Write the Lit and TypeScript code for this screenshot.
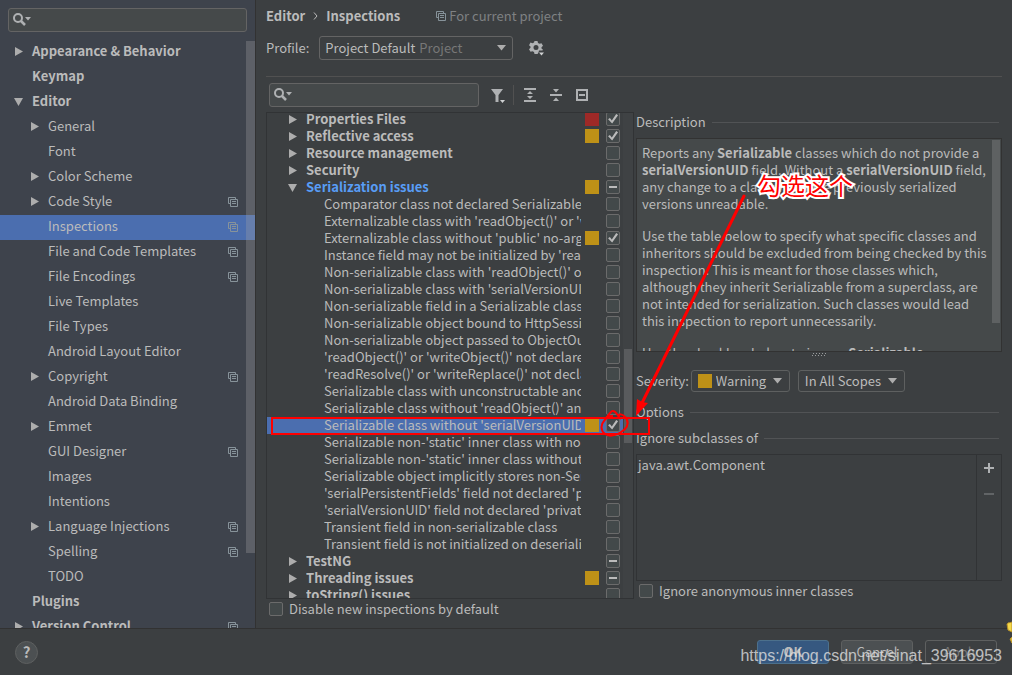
import { LitElement, html, css, svg, nothing } from "lit";
import { customElement, property } from "lit/decorators.js";
import { classMap } from "lit/directives/class-map.js";

const base = css`
  *, *::before, *::after { box-sizing: border-box; }
  button, input, select { font: inherit; color: inherit; margin: 0; }
  svg { display: block; flex: none; }
  ul { list-style: none; margin: 0; padding: 0; }
  input[type="checkbox"] {
    appearance: none;
    flex: none;
    display: grid;
    place-items: center;
    width: 14px;
    height: 14px;
    border: 1px solid #6b6b6b;
    border-radius: 2px;
    background: #43494a;
  }
  input[type="checkbox"]:checked::before {
    content: "";
    width: 12px;
    height: 12px;
    background: #bbbbbb;
    clip-path: polygon(9% 53%, 24% 42%, 40% 62%, 77% 9%, 92% 19%, 43% 87%);
  }
  input[type="checkbox"]:indeterminate::before {
    content: "";
    width: 8px;
    height: 2px;
    background: #bbbbbb;
  }
`;

const copyIcon = html`<svg width="10" height="10" viewBox="0 0 10 10" fill="none" stroke="#87939a" aria-hidden="true">
  <path d="M2 6.5H.5v-6h7V2M2.5 2.5h7v7h-7zM4 4.5h4M4 6.5h4" />
</svg>`;

const arrowIcon = (open: boolean) => html`<svg width="9" height="9" viewBox="0 0 9 9" fill="#adadad" aria-hidden="true">
  ${open ? svg`<path d="M0 1h9L4.500 9z" />` : svg`<path d="M1 0v9l8-4.500z" />`}
</svg>`;

const caretIcon = html`<svg class="caret" width="9" height="6" viewBox="0 0 9 6" fill="#adadad" aria-hidden="true"><path d="M0 0h9L4.500 5.500z" /></svg>`;

@customElement("search-field")
export class SearchField extends LitElement {
  @property() label = "Search";
  static styles = [base, css`
    :host { display: block; }
    .field {
      display: flex;
      align-items: center;
      height: 24px;
      padding: 0 4px;
      gap: 4px;
      border: 1px solid #646464;
      border-radius: 3px;
      background: #45494a;
    }
    .input { flex: 1; min-width: 0; border: 0; padding: 0; background: none; outline: none; }
  `];
  render() {
    return html`<label class="field">
      <svg width="18" height="14" viewBox="0 0 18 14" aria-hidden="true">
        <circle cx="5" cy="5" r="4" fill="none" stroke="#afb1b3" stroke-width="2" />
        <path d="M8 8l4 4" stroke="#afb1b3" stroke-width="2.500" />
        <path d="M12 4h6l-3 3.500z" fill="#afb1b3" />
      </svg>
      <input class="input" type="text" aria-label=${this.label} />
    </label>`;
  }
}

type Nav = { text: string; level: number; arrow?: "open" | "closed"; copy?: boolean; selected?: boolean };
const nav: Nav[] = [
  { text: "Appearance & Behavior", level: 0, arrow: "closed" },
  { text: "Keymap", level: 0 },
  { text: "Editor", level: 0, arrow: "open" },
  { text: "General", level: 1, arrow: "closed" },
  { text: "Font", level: 1 },
  { text: "Color Scheme", level: 1, arrow: "closed" },
  { text: "Code Style", level: 1, arrow: "closed", copy: true },
  { text: "Inspections", level: 1, copy: true, selected: true },
  { text: "File and Code Templates", level: 1, copy: true },
  { text: "File Encodings", level: 1, copy: true },
  { text: "Live Templates", level: 1 },
  { text: "File Types", level: 1 },
  { text: "Android Layout Editor", level: 1 },
  { text: "Copyright", level: 1, arrow: "closed", copy: true },
  { text: "Android Data Binding", level: 1 },
  { text: "Emmet", level: 1, arrow: "closed" },
  { text: "GUI Designer", level: 1, copy: true },
  { text: "Images", level: 1 },
  { text: "Intentions", level: 1 },
  { text: "Language Injections", level: 1, arrow: "closed", copy: true },
  { text: "Spelling", level: 1, copy: true },
  { text: "TODO", level: 1 },
  { text: "Plugins", level: 0 },
  { text: "Version Control", level: 0, arrow: "closed", copy: true },
];

@customElement("settings-nav")
export class SettingsNav extends LitElement {
  static styles = [base, css`
    :host {
      display: flex;
      flex-direction: column;
      gap: 8px;
      min-height: 0;
      padding-top: 8px;
      background: #3e434c;
      border-right: 1px solid #323232;
    }
    .search { margin: 0 8px; }
    .tree { position: relative; flex: 1; min-height: 0; overflow: hidden; }
    .row {
      display: flex;
      align-items: center;
      gap: 8px;
      height: 25px;
      padding: 0 17px 2px 14px;
    }
    .nested { padding-left: 30px; }
    .selected { background: #4b6eaf; }
    .top { font-weight: bold; }
    .twisty { width: 10px; flex: none; }
    .name { flex: 1; padding-bottom: 2px; white-space: nowrap; }
    .thumb {
      position: absolute;
      top: 1px;
      right: 0;
      width: 9px;
      height: 87%;
      background: rgba(166, 166, 166, 0.3);
    }
  `];
  render() {
    return html`
      <search-field class="search" label="Search settings"></search-field>
      <div class="tree">
        <ul>
          ${nav.map((n) => html`<li class=${classMap({ row: true, nested: n.level === 1, top: n.level === 0, selected: !!n.selected })}>
            <span class="twisty">${n.arrow ? arrowIcon(n.arrow === "open") : nothing}</span>
            <span class="name">${n.text}</span>
            ${n.copy ? copyIcon : nothing}
          </li>`)}
        </ul>
        <div class="thumb"></div>
      </div>`;
  }
}

type Check = "on" | "off" | "mixed";
type Insp = { text: string; group?: "open" | "closed"; sev?: "error" | "warning"; check: Check; selected?: boolean };
const inspections: Insp[] = [
  { text: "Properties Files", group: "closed", sev: "error", check: "on" },
  { text: "Reflective access", group: "closed", sev: "warning", check: "on" },
  { text: "Resource management", group: "closed", check: "off" },
  { text: "Security", group: "closed", check: "off" },
  { text: "Serialization issues", group: "open", sev: "warning", check: "mixed" },
  { text: "Comparator class not declared Serializable", check: "off" },
  { text: "Externalizable class with 'readObject()' or 'writeObject()'", check: "off" },
  { text: "Externalizable class without 'public' no-arg constructor", sev: "warning", check: "on" },
  { text: "Instance field may not be initialized by 'readObject()'", check: "off" },
  { text: "Non-serializable class with 'readObject()' or 'writeObject()'", check: "off" },
  { text: "Non-serializable class with 'serialVersionUID'", check: "off" },
  { text: "Non-serializable field in a Serializable class", check: "off" },
  { text: "Non-serializable object bound to HttpSession", check: "off" },
  { text: "Non-serializable object passed to ObjectOutputStream", check: "off" },
  { text: "'readObject()' or 'writeObject()' not declared 'private'", check: "off" },
  { text: "'readResolve()' or 'writeReplace()' not declared 'protected'", check: "off" },
  { text: "Serializable class with unconstructable ancestor", check: "off" },
  { text: "Serializable class without 'readObject()' and 'writeObject()'", check: "off" },
  { text: "Serializable class without 'serialVersionUID'", sev: "warning", check: "on", selected: true },
  { text: "Serializable non-'static' inner class with non-Serializable outer class", check: "off" },
  { text: "Serializable non-'static' inner class without 'serialVersionUID'", check: "off" },
  { text: "Serializable object implicitly stores non-Serializable object", check: "off" },
  { text: "'serialPersistentFields' field not declared 'private static final'", check: "off" },
  { text: "'serialVersionUID' field not declared 'private static final long'", check: "off" },
  { text: "Transient field in non-serializable class", check: "off" },
  { text: "Transient field is not initialized on deserialization", check: "off" },
  { text: "TestNG", group: "closed", check: "mixed" },
  { text: "Threading issues", group: "closed", sev: "warning", check: "mixed" },
  { text: "toString() issues", group: "closed", check: "off" },
];

@customElement("inspection-tree")
export class InspectionTree extends LitElement {
  static styles = [base, css`
    :host {
      display: block;
      position: relative;
      overflow: hidden;
      border: 1px solid #313335;
    }
    .list { margin-top: -2px; }
    .row {
      display: grid;
      grid-template-columns: 9px minmax(0, 1fr) 14px 14px;
      align-items: start;
      height: 17px;
      padding: 0 13px 0 21px;
    }
    .row.selected { background: #4b6eaf; }
    .arrow { padding-top: 4px; }
    .name { overflow: hidden; white-space: nowrap; line-height: 16px; height: 17px; margin: 0 11px 0 27px; }
    .group { margin-left: 9px; font-weight: bold; }
    .open { color: #589df6; }
    .swatch { width: 14px; height: 14px; margin: 1px 0 0 -7px; }
    .error { background: #9e2927; }
    .warning { background: #be9117; }
    .check { margin-top: 1px; }
    .track { position: absolute; top: 0; right: 0; bottom: 0; width: 10px; background: #3f4244; }
    .thumb { position: absolute; top: 236px; right: 1px; width: 8px; height: 94px; background: #595b5d; }
  `];
  render() {
    return html`<ul class="list">
        ${inspections.map((i) => html`<li class=${classMap({ row: true, selected: !!i.selected })}>
          <span class="arrow">${i.group ? arrowIcon(i.group === "open") : nothing}</span>
          <span class=${classMap({ name: true, group: !!i.group, open: i.group === "open" })}>${i.text}</span>
          <span class=${classMap({ swatch: true, error: i.sev === "error", warning: i.sev === "warning" })}></span>
          <input class="check" type="checkbox" aria-label=${i.text}
            .checked=${i.check === "on"} .indeterminate=${i.check === "mixed"} />
        </li>`)}
      </ul>
      <div class="track"></div>
      <div class="thumb"></div>`;
  }
}

@customElement("inspection-details")
export class InspectionDetails extends LitElement {
  static styles = [base, css`
    :host { display: flex; flex-direction: column; min-width: 0; }
    .title { display: flex; align-items: center; gap: 6px; margin: 0; font: inherit; line-height: 18px; white-space: nowrap; }
    .title::after { content: ""; flex: 1; height: 1px; margin-right: 3px; background: #515355; }
    .description {
      position: relative;
      height: 214px;
      margin-top: 7px;
      padding: 5px 10px 0 5px;
      overflow: hidden;
      border: 1px solid #323232;
      background: #45494a;
      line-height: 17px;
      white-space: nowrap;
    }
    .para { margin: 0 0 15px; }
    .thumb { position: absolute; top: 1px; right: 1px; width: 8px; height: 183px; background: #5e6162; }
    .grip { align-self: center; margin: 1px 0 14px; }
    .severity { display: flex; align-items: center; gap: 8px; height: 22px; white-space: nowrap; }
    .caption { margin-right: -6px; }
    .combo {
      display: flex;
      align-items: center;
      position: relative;
      height: 22px;
      border: 1px solid #5e6060;
      border-radius: 3px;
    }
    .select { appearance: none; height: 20px; padding: 0 22px 0 6px; border: 0; background: none; line-height: 18px; outline: none; }
    .swatch { width: 14px; height: 14px; margin-left: 6px; background: #be9117; }
    .swatch + .select { padding-left: 4px; }
    .caret { position: absolute; right: 7px; pointer-events: none; }
    .options { margin-top: 11px; }
    .ignore { margin-top: 8px; }
    .classes { display: flex; flex: 1; margin-top: 7px; border: 1px solid #313335; }
    .items { flex: 1; padding: 0 1px; line-height: 20px; }
    .tools { display: flex; flex-direction: column; width: 25px; border-left: 1px solid #313335; }
    .tool { display: grid; place-items: center; height: 26px; padding: 0; border: 0; background: none; }
    .anonymous { display: flex; align-items: center; gap: 6px; height: 20px; padding-left: 3px; }
    .bottom { margin-bottom: 18px; }
  `];
  render() {
    return html`
      <h3 class="title">Description</h3>
      <div class="description">
        <p class="para">Reports any <b>Serializable</b> classes which do not provide a<br /><b>serialVersionUID</b> field. Without a <b>serialVersionUID</b> field,<br />any change to a class will make previously serialized<br />versions unreadable.</p>
        <p class="para">Use the table below to specify what specific classes and<br />inheritors should be excluded from being checked by this<br />inspection. This is meant for those classes which,<br />although they inherit Serializable from a superclass, are<br />not intended for serialization. Such classes would lead<br />this inspection to report unnecessarily.</p>
        <p class="para">Use the checkbox below to ignore <b>Serializable</b></p>
        <div class="thumb"></div>
      </div>
      <svg class="grip" width="15" height="3" viewBox="0 0 15 3" aria-hidden="true">
        <path d="M1 .5h14M0 2.500h14" stroke="#9a9c9d" stroke-dasharray="1 2" />
      </svg>
      <div class="severity">
        <label class="caption" for="severity">Severity:</label>
        <span class="combo"><span class="swatch"></span>
          <select class="select" id="severity"><option>Warning</option></select>${caretIcon}</span>
        <span class="combo">
          <select class="select" aria-label="Scope"><option>In All Scopes</option></select>${caretIcon}</span>
      </div>
      <h3 class="title options">Options</h3>
      <h3 class="title ignore">Ignore subclasses of</h3>
      <div class="classes">
        <div class="items">java.awt.Component</div>
        <div class="tools">
          <button class="tool" aria-label="Add"><svg width="10" height="10" viewBox="0 0 10 10"><path d="M5 0v10M0 5h10" stroke="#afb1b3" stroke-width="2" /></svg></button>
          <button class="tool" aria-label="Remove"><svg width="10" height="10" viewBox="0 0 10 10"><path d="M0 5h10" stroke="#616466" stroke-width="2" /></svg></button>
        </div>
      </div>
      <label class="anonymous bottom"><input type="checkbox" />Ignore anonymous inner classes</label>`;
  }
}

@customElement("app-root")
export class AppRoot extends LitElement {
  static styles = [base, css`
    :host {
      display: flex;
      flex-direction: column;
      position: relative;
      height: 100vh;
      overflow: hidden;
      background: #3c3f41;
      color: #bbbbbb;
      font-family: "Noto Sans CJK SC", sans-serif;
      font-size: 13px;
      line-height: 18px;
    }
    .body { display: grid; grid-template: minmax(0, 1fr) / 256px minmax(0, 1fr); flex: 1; min-height: 0; }
    .content { display: flex; flex-direction: column; min-height: 0; padding: 7px 10px 9px 10px; }
    .crumbs { display: flex; align-items: center; gap: 8px; font-weight: bold; }
    .scope { display: flex; align-items: center; gap: 3px; margin-left: 28px; font-weight: normal; color: #7f8183; }
    .profile { display: flex; align-items: center; gap: 10px; height: 24px; margin: 11px 0 16px; }
    .combo {
      display: flex;
      align-items: center;
      position: relative;
      width: 194px;
      height: 24px;
      padding-left: 5px;
      border: 1px solid #646464;
      border-radius: 3px;
    }
    .select { appearance: none; position: absolute; inset: 0; width: 100%; border: 0; padding: 0 5px; background: none; line-height: 20px; outline: none; }
    .hint { margin-left: 94px; color: #777777; }
    .caret { position: absolute; right: 6px; }
    .icon { display: grid; place-items: center; padding: 0; border: 0; background: none; }
    .gear { margin-left: 6px; }
    .rule { height: 1px; margin-bottom: 6px; background: #515151; }
    .panes { display: grid; grid-template: minmax(0, 1fr) / 368px minmax(0, 1fr); gap: 2px; flex: 1; min-height: 0; }
    .left { display: flex; flex-direction: column; min-height: 0; }
    .toolbar { display: flex; align-items: center; gap: 14px; height: 24px; margin-bottom: 5px; padding-left: 3px; }
    .filter { width: 210px; margin-right: -2px; }
    .split { width: 1px; height: 20px; margin: 0 -4px 0 -7px; background: #515151; }
    .tree { flex: 1; min-height: 0; }
    .disable { display: flex; align-items: center; gap: 6px; height: 20px; padding-left: 3px; }
    .details { padding-top: 30px; }
    .footer { display: flex; align-items: center; gap: 12px; height: 47px; padding: 0 15px; border-top: 1px solid #323232; }
    .help { width: 23px; height: 23px; margin-right: auto; padding: 0; border: 1px solid #5e6060; border-radius: 50%; background: #4c5052; font-weight: bold; font-size: 15px; line-height: 20px; }
    .button { width: 72px; height: 24px; padding: 0; border: 1px solid #5e6060; border-radius: 3px; background: #4c5052; line-height: 20px; }
    .primary { border-color: #4c708c; background: #365880; font-weight: bold; }
    .disabled { background: none; color: #777777; }
    .overlay { position: absolute; left: 0; top: 0; pointer-events: none; }
    .note { position: absolute; left: 757px; top: 169px; font-size: 24px; line-height: 32px; color: #ff0000; -webkit-text-stroke: 4px #ffffff; paint-order: stroke fill; }
    .mark { position: absolute; right: 10px; bottom: 9px; font: 16px/20px "Liberation Sans", sans-serif; color: rgba(225, 225, 225, 0.8); }
  `];
  render() {
    return html`
      <div class="body">
        <settings-nav></settings-nav>
        <main class="content">
          <div class="crumbs">
            <span>Editor</span>
            <svg width="5" height="8" viewBox="0 0 5 8" fill="none" stroke="#bbbbbb"><path d="M1 .5L4 4 1 7.500" /></svg>
            <span>Inspections</span>
            <span class="scope">${copyIcon}For current project</span>
          </div>
          <div class="profile">
            <label for="profile">Profile:</label>
            <span class="combo">
              <select class="select" id="profile"><option>Project Default</option></select>
              <span class="hint">Project</span>${caretIcon}
            </span>
            <button class="icon gear" aria-label="Profile actions">
              <svg width="16" height="16" viewBox="0 0 16 16">
                <path fill="#afb1b3" fill-rule="evenodd" d="M5.500 1h3l.5 2 1.500.8 2-.6 1.500 2.600L12.500 7.200v1.200l1.500 1.400-.6.700H10l-.5 2L8.500 14h-3L5 12l-1.500-.8-2 .6L0 9.200l1.500-1.400V6.600L0 5.200l1.500-2.600 2 .6L5 2.400zM7 5a2.500 2.500 0 1 0 0 5 2.500 2.500 0 0 0 0-5z" />
                <path fill="#d0d2d3" d="M10 12.500h5L12.500 15.500z" />
              </svg>
            </button>
          </div>
          <div class="rule"></div>
          <div class="panes">
            <section class="left">
              <div class="toolbar">
                <search-field class="filter" label="Search inspections"></search-field>
                <button class="icon" aria-label="Filter"><svg width="15" height="15" viewBox="0 0 15 15">
                  <path fill="#afb1b3" d="M0 1h12L7.500 7v7h-3V7z" /><path fill="#d0d2d3" d="M9 12h5l-2.500 3z" /></svg></button>
                <span class="split"></span>
                <button class="icon" aria-label="Expand all"><svg width="12" height="14" viewBox="0 0 12 14" fill="#afb1b3">
                  <path d="M0 0h12v2H0zM0 12h12v2H0zM6 3l3 3H3zM6 11L3 8h6z" /></svg></button>
                <button class="icon" aria-label="Collapse all"><svg width="12" height="14" viewBox="0 0 12 14" fill="#afb1b3">
                  <path d="M0 6h12v2H0zM3 1h6L6 4.500zM3 13h6L6 9.500z" /></svg></button>
                <button class="icon" aria-label="Reset"><svg width="12" height="12" viewBox="0 0 12 12" fill="none" stroke="#afb1b3" stroke-width="2">
                  <path d="M1 1h10v10H1zM3 6h6" /></svg></button>
              </div>
              <inspection-tree class="tree"></inspection-tree>
              <label class="disable"><input type="checkbox" />Disable new inspections by default</label>
            </section>
            <inspection-details class="details"></inspection-details>
          </div>
        </main>
      </div>
      <footer class="footer">
        <button class="help" aria-label="Help">?</button>
        <button class="button primary">OK</button>
        <button class="button">Cancel</button>
        <button class="button disabled" disabled>Apply</button>
      </footer>
      <svg class="overlay" width="1012" height="675" viewBox="0 0 1012 675" fill="none" stroke="#ff0000" stroke-width="2" aria-hidden="true">
        <rect x="272" y="418" width="377" height="16" />
        <path d="M744 196L642 403" stroke-width="3" stroke-linecap="round" />
        <path d="M636 416L637 399 642 402 648 403z" fill="#ff0000" stroke="none" />
        <path d="M606 418C609 415 611 410 613 411C616 411 617 415 619 417C618 413 623 414 625 417C629 421 628 426 625 429C620 434 611 438 605 434C600 430 601 424 604 421C606 418 609 416 613 416" />
        <path d="M1007 624C1008 622 1011 623 1012 622V632L1008 630zM1012 637L1010 639 1012 643z" fill="#f5d94a" stroke="#b8922a" stroke-width="1" />
      </svg>
      <span class="note">勾选这个</span>
      <span class="mark">https://blog.csdn.net/sinat_39616953</span>`;
  }
}
